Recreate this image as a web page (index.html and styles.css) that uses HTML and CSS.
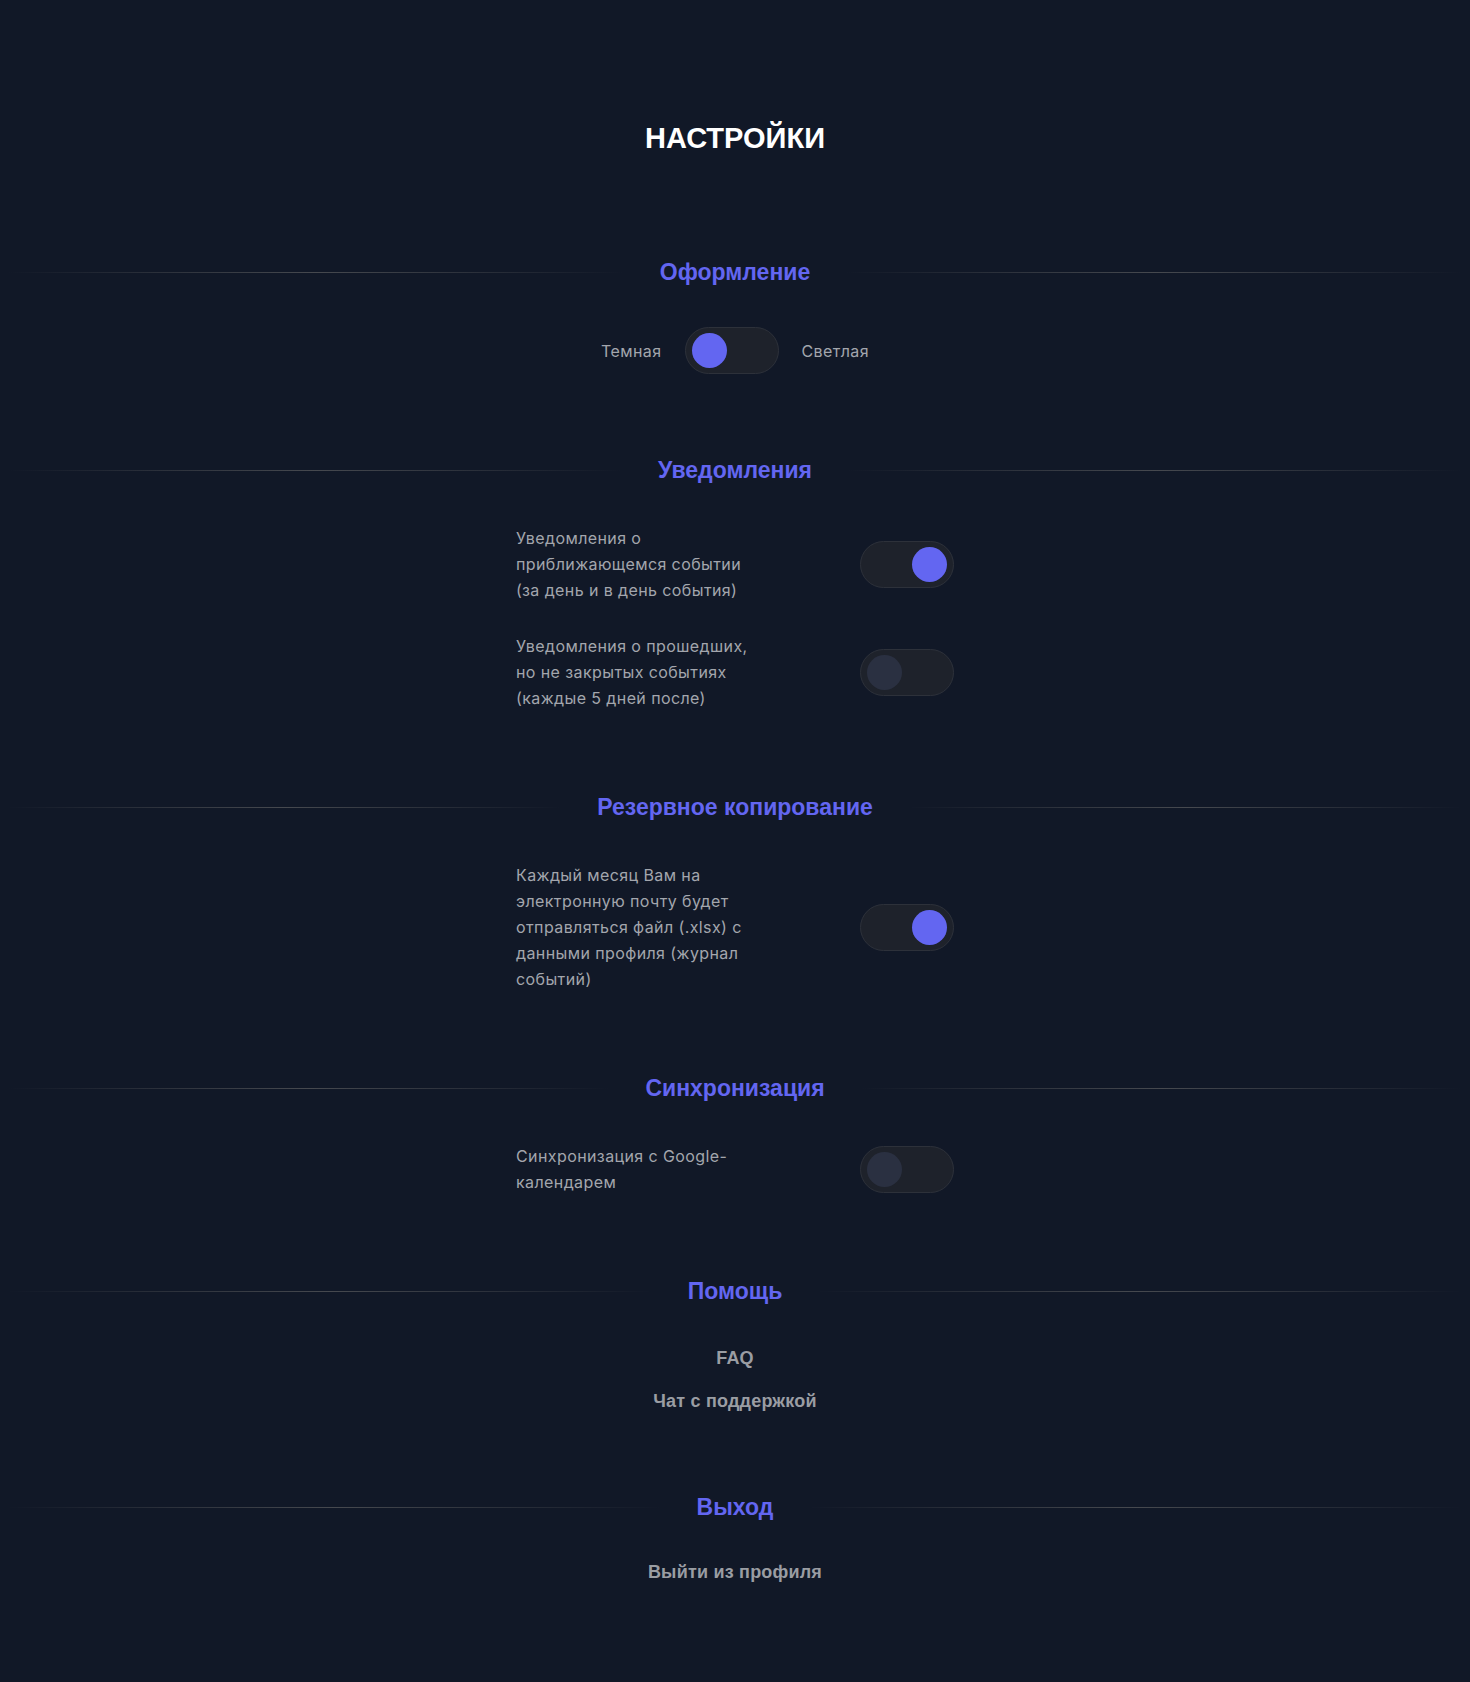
FILE: index.html
```html
<!DOCTYPE html>
<html lang="ru">
<head>
<meta charset="utf-8">
<title>Настройки</title>
<link rel="stylesheet" href="styles.css">
</head>
<body>
<main class="page">
  <h1 class="title">НАСТРОЙКИ</h1>

  <section class="section">
    <div class="divider"><span class="line"></span><h2 class="heading">Оформление</h2><span class="line"></span></div>
    <div class="theme-row">
      <span class="label">Темная</span>
      <span class="toggle"><span class="knob on"></span></span>
      <span class="label">Светлая</span>
    </div>
  </section>

  <section class="section">
    <div class="divider"><span class="line"></span><h2 class="heading">Уведомления</h2><span class="line"></span></div>
    <div class="rows">
      <div class="row">
        <p class="text">Уведомления о приближающемся событии (за день и в день события)</p>
        <span class="toggle toggle-right"><span class="knob on"></span></span>
      </div>
      <div class="row">
        <p class="text">Уведомления о прошедших, но не закрытых событиях (каждые 5 дней после)</p>
        <span class="toggle"><span class="knob off"></span></span>
      </div>
    </div>
  </section>

  <section class="section">
    <div class="divider"><span class="line"></span><h2 class="heading">Резервное копирование</h2><span class="line"></span></div>
    <div class="rows">
      <div class="row">
        <p class="text">Каждый месяц Вам на электронную почту будет отправляться файл (.xlsx) с данными профиля (журнал событий)</p>
        <span class="toggle toggle-right"><span class="knob on"></span></span>
      </div>
    </div>
  </section>

  <section class="section">
    <div class="divider"><span class="line"></span><h2 class="heading">Синхронизация</h2><span class="line"></span></div>
    <div class="rows">
      <div class="row">
        <p class="text">Синхронизация с Google-календарем</p>
        <span class="toggle"><span class="knob off"></span></span>
      </div>
    </div>
  </section>

  <section class="section section-help">
    <div class="divider"><span class="line"></span><h2 class="heading">Помощь</h2><span class="line"></span></div>
    <div class="links help-links">
      <a class="link">FAQ</a>
      <a class="link">Чат с поддержкой</a>
    </div>
  </section>

  <section class="section">
    <div class="divider"><span class="line"></span><h2 class="heading">Выход</h2><span class="line"></span></div>
    <div class="links exit-links">
      <a class="link">Выйти из профиля</a>
    </div>
  </section>
</main>
</body>
</html>
```

FILE: styles.css
```css
html, body {
  margin: 0;
  padding: 0;
  background: #111827;
}

body {
  min-height: 1682px;
  font-family: Inter, "Liberation Sans", sans-serif;
  color: #9ca3af;
}

.page {
  display: flex;
  flex-direction: column;
  align-items: stretch;
  padding: 121px 8px 80px;
}

.title {
  margin: 0 0 103px;
  text-align: center;
  font-family: "Liberation Sans", Arial, sans-serif;
  font-weight: 700;
  font-size: 29px;
  line-height: 34px;
  color: #ffffff;
}

.section {
  display: flex;
  flex-direction: column;
  align-items: center;
  margin-bottom: 82px;
}

.section-help {
  margin-bottom: 78px;
}

.divider {
  display: flex;
  align-items: center;
  width: 100%;
  margin-bottom: 41px;
}

.line {
  flex: 1;
  height: 1px;
  background: linear-gradient(to right, rgba(70, 72, 78, 0), #46494f 50%, rgba(70, 72, 78, 0));
}

.heading {
  margin: 0;
  padding: 0 36px;
  font-family: "Liberation Sans", Arial, sans-serif;
  font-weight: 700;
  font-size: 23px;
  line-height: 28px;
  color: #6366f1;
  white-space: nowrap;
}

.theme-row {
  display: flex;
  align-items: center;
  gap: 23px;
}

.label {
  font-size: 16px;
  line-height: 24px;
  letter-spacing: 0.4px;
  color: #a3a6ad;
}

.toggle {
  box-sizing: border-box;
  display: flex;
  align-items: center;
  justify-content: flex-start;
  width: 94px;
  height: 47px;
  padding: 0 6px;
  border: 1px solid #2d313a;
  border-radius: 24px;
  background: #1e222b;
}

.toggle-right {
  justify-content: flex-end;
}

.knob {
  width: 35px;
  height: 35px;
  border-radius: 50%;
}

.knob.on {
  background: #6366f1;
}

.knob.off {
  background: #2a3041;
}

.rows {
  display: flex;
  flex-direction: column;
  gap: 30px;
  width: 438px;
}

.row {
  display: flex;
  align-items: center;
  justify-content: space-between;
}

.text {
  margin: 0;
  width: 245px;
  font-size: 16px;
  line-height: 26px;
  letter-spacing: 0.4px;
  color: #a3a6ad;
}

.links {
  display: flex;
  flex-direction: column;
  align-items: center;
  gap: 15px;
}

.help-links {
  margin-top: -2px;
}

.exit-links {
  margin-top: -4px;
}

.link {
  font-family: "Liberation Sans", Arial, sans-serif;
  font-weight: 700;
  font-size: 18px;
  line-height: 28px;
  letter-spacing: 0.2px;
  color: #9a9da3;
  cursor: pointer;
}
```
